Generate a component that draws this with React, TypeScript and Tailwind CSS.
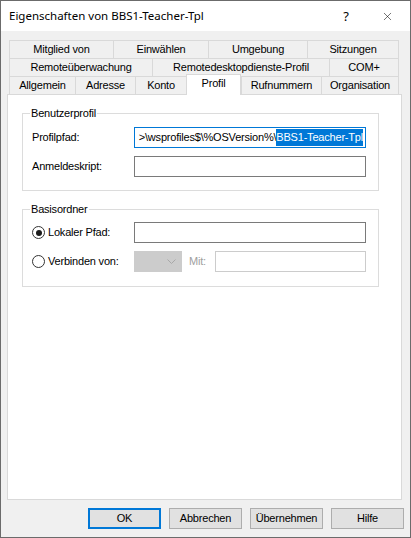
import { X } from "lucide-react";

type Tab = { label: string; w: number; active?: boolean };

const tabRows: Tab[][] = [
  [
    { label: "Mitglied von", w: 104 },
    { label: "Einwählen", w: 95 },
    { label: "Umgebung", w: 99 },
    { label: "Sitzungen", w: 92 },
  ],
  [
    { label: "Remoteüberwachung", w: 143 },
    { label: "Remotedesktopdienste-Profil", w: 177 },
    { label: "COM+", w: 70 },
  ],
  [
    { label: "Allgemein", w: 66 },
    { label: "Adresse", w: 60 },
    { label: "Konto", w: 51 },
    { label: "Profil", w: 55, active: true },
    { label: "Rufnummern", w: 80 },
    { label: "Organisation", w: 78 },
  ],
];

function Radio({ checked }: { checked?: boolean }) {
  return (
    <span className="flex h-[13px] w-[13px] shrink-0 items-center justify-center rounded-full border border-[#333333] bg-white">
      {checked && <span className="h-[6px] w-[6px] rounded-full bg-[#1a1a1a]" />}
    </span>
  );
}

function DialogButton({ label, primary }: { label: string; primary?: boolean }) {
  return (
    <button
      className={
        primary
          ? "flex h-[21px] w-[73px] items-center justify-center border-2 border-[#0078d7] bg-[#e1e1e1] text-[11px] text-black"
          : "flex h-[21px] w-[73px] items-center justify-center border border-[#adadad] bg-[#e1e1e1] text-[11px] text-black"
      }
    >
      {label}
    </button>
  );
}

export default function App() {
  return (
    <div className="flex h-[538px] w-[411px] flex-col border border-[#6b6b6b] bg-[#f0f0f0] font-['Liberation_Sans',Arial,sans-serif] text-[11px] tracking-[-0.2px] text-black">
      {/* Titelleiste */}
      <div className="flex h-[30px] shrink-0 items-center bg-white pl-[8px] tracking-normal">
        <span className="font-['Noto_Sans',sans-serif] text-[11.5px] leading-none">Eigenschaften von BBS1-Teacher-Tpl</span>
        <span className="ml-auto mr-[32px] font-['Noto_Sans',sans-serif] text-[13px] leading-none">?</span>
        <X size={13} strokeWidth={1} className="mr-[16px]" />
      </div>

      <div className="flex flex-1 flex-col pl-[6px] pt-[9px]">
        {/* Registerkarten */}
        <div className="ml-[2px] flex flex-col">
          {tabRows.map((row, ri) => (
            <div key={ri} className="flex h-[18px]">
              {row.map((tab, ti) => (
                <div
                  key={tab.label}
                  style={{ width: tab.w }}
                  className={
                    tab.active
                      ? "relative z-10 -mt-[2px] flex h-[21px] items-center justify-center border-x border-t border-[#d9d9d9] bg-white pb-[3px] leading-none"
                      : ti === row.length - 1
                        ? "flex h-[18px] items-center justify-center border-x border-t border-[#d9d9d9] leading-none"
                        : "flex h-[18px] items-center justify-center border-l border-t border-[#d9d9d9] leading-none"
                  }
                >
                  {tab.label}
                </div>
              ))}
            </div>
          ))}
        </div>

        {/* Profil-Seite */}
        <div className="h-[406px] w-[395px] border border-[#d9d9d9] bg-white">
          <fieldset className="ml-[14px] mt-[12px] w-[357px] border border-[#dcdcdc] p-0">
            <legend className="ml-[7px] px-[1px] leading-[13px]">Benutzerprofil</legend>
            <div className="flex flex-col gap-[8px] pb-[13px] pl-[9px] pt-[7px]">
              <div className="flex items-center">
                <span className="w-[102px]">Profilpfad:</span>
                <div className="flex h-[21px] w-[232px] items-center justify-end overflow-hidden whitespace-nowrap border border-[#0078d7] pr-[2px]">
                  <span>{">\\wsprofiles$\\%OSVersion%\\"}</span>
                  <span className="bg-[#0078d7] text-white">BBS1-Teacher-Tpl</span>
                </div>
              </div>
              <div className="flex items-center">
                <span className="w-[102px]">Anmeldeskript:</span>
                <div className="h-[21px] w-[232px] border border-[#7a7a7a]" />
              </div>
            </div>
          </fieldset>

          <fieldset className="ml-[14px] mt-[12px] w-[357px] border border-[#dcdcdc] p-0">
            <legend className="ml-[7px] px-[1px] leading-[13px]">Basisordner</legend>
            <div className="flex flex-col gap-[8px] pb-[14px] pl-[9px] pt-[6px]">
              <div className="flex items-center">
                <div className="flex w-[102px] items-center gap-[3px]">
                  <Radio checked />
                  <span>Lokaler Pfad:</span>
                </div>
                <div className="h-[21px] w-[232px] border border-[#7a7a7a]" />
              </div>
              <div className="flex items-center">
                <div className="flex w-[102px] items-center gap-[3px]">
                  <Radio />
                  <span>Verbinden von:</span>
                </div>
                <div className="flex h-[21px] w-[48px] items-center justify-end border border-[#cccccc] bg-[#cccccc] pr-[5px]">
                  <svg width="9" height="5" viewBox="0 0 9 5" fill="none">
                    <path d="M0.5 0.5 L4.5 4.5 L8.5 0.5" stroke="#a8a8a8" strokeWidth="1" />
                  </svg>
                </div>
                <span className="ml-[7px] w-[26px] text-[#a0a0a0]">Mit:</span>
                <div className="h-[21px] w-[151px] border border-[#cccccc] bg-white" />
              </div>
            </div>
          </fieldset>
        </div>

        {/* Schaltflächen */}
        <div className="mt-[8px] flex justify-end gap-[8px] pr-[6px]">
          <DialogButton label="OK" primary />
          <DialogButton label="Abbrechen" />
          <DialogButton label="Übernehmen" />
          <DialogButton label="Hilfe" />
        </div>
      </div>
    </div>
  );
}
